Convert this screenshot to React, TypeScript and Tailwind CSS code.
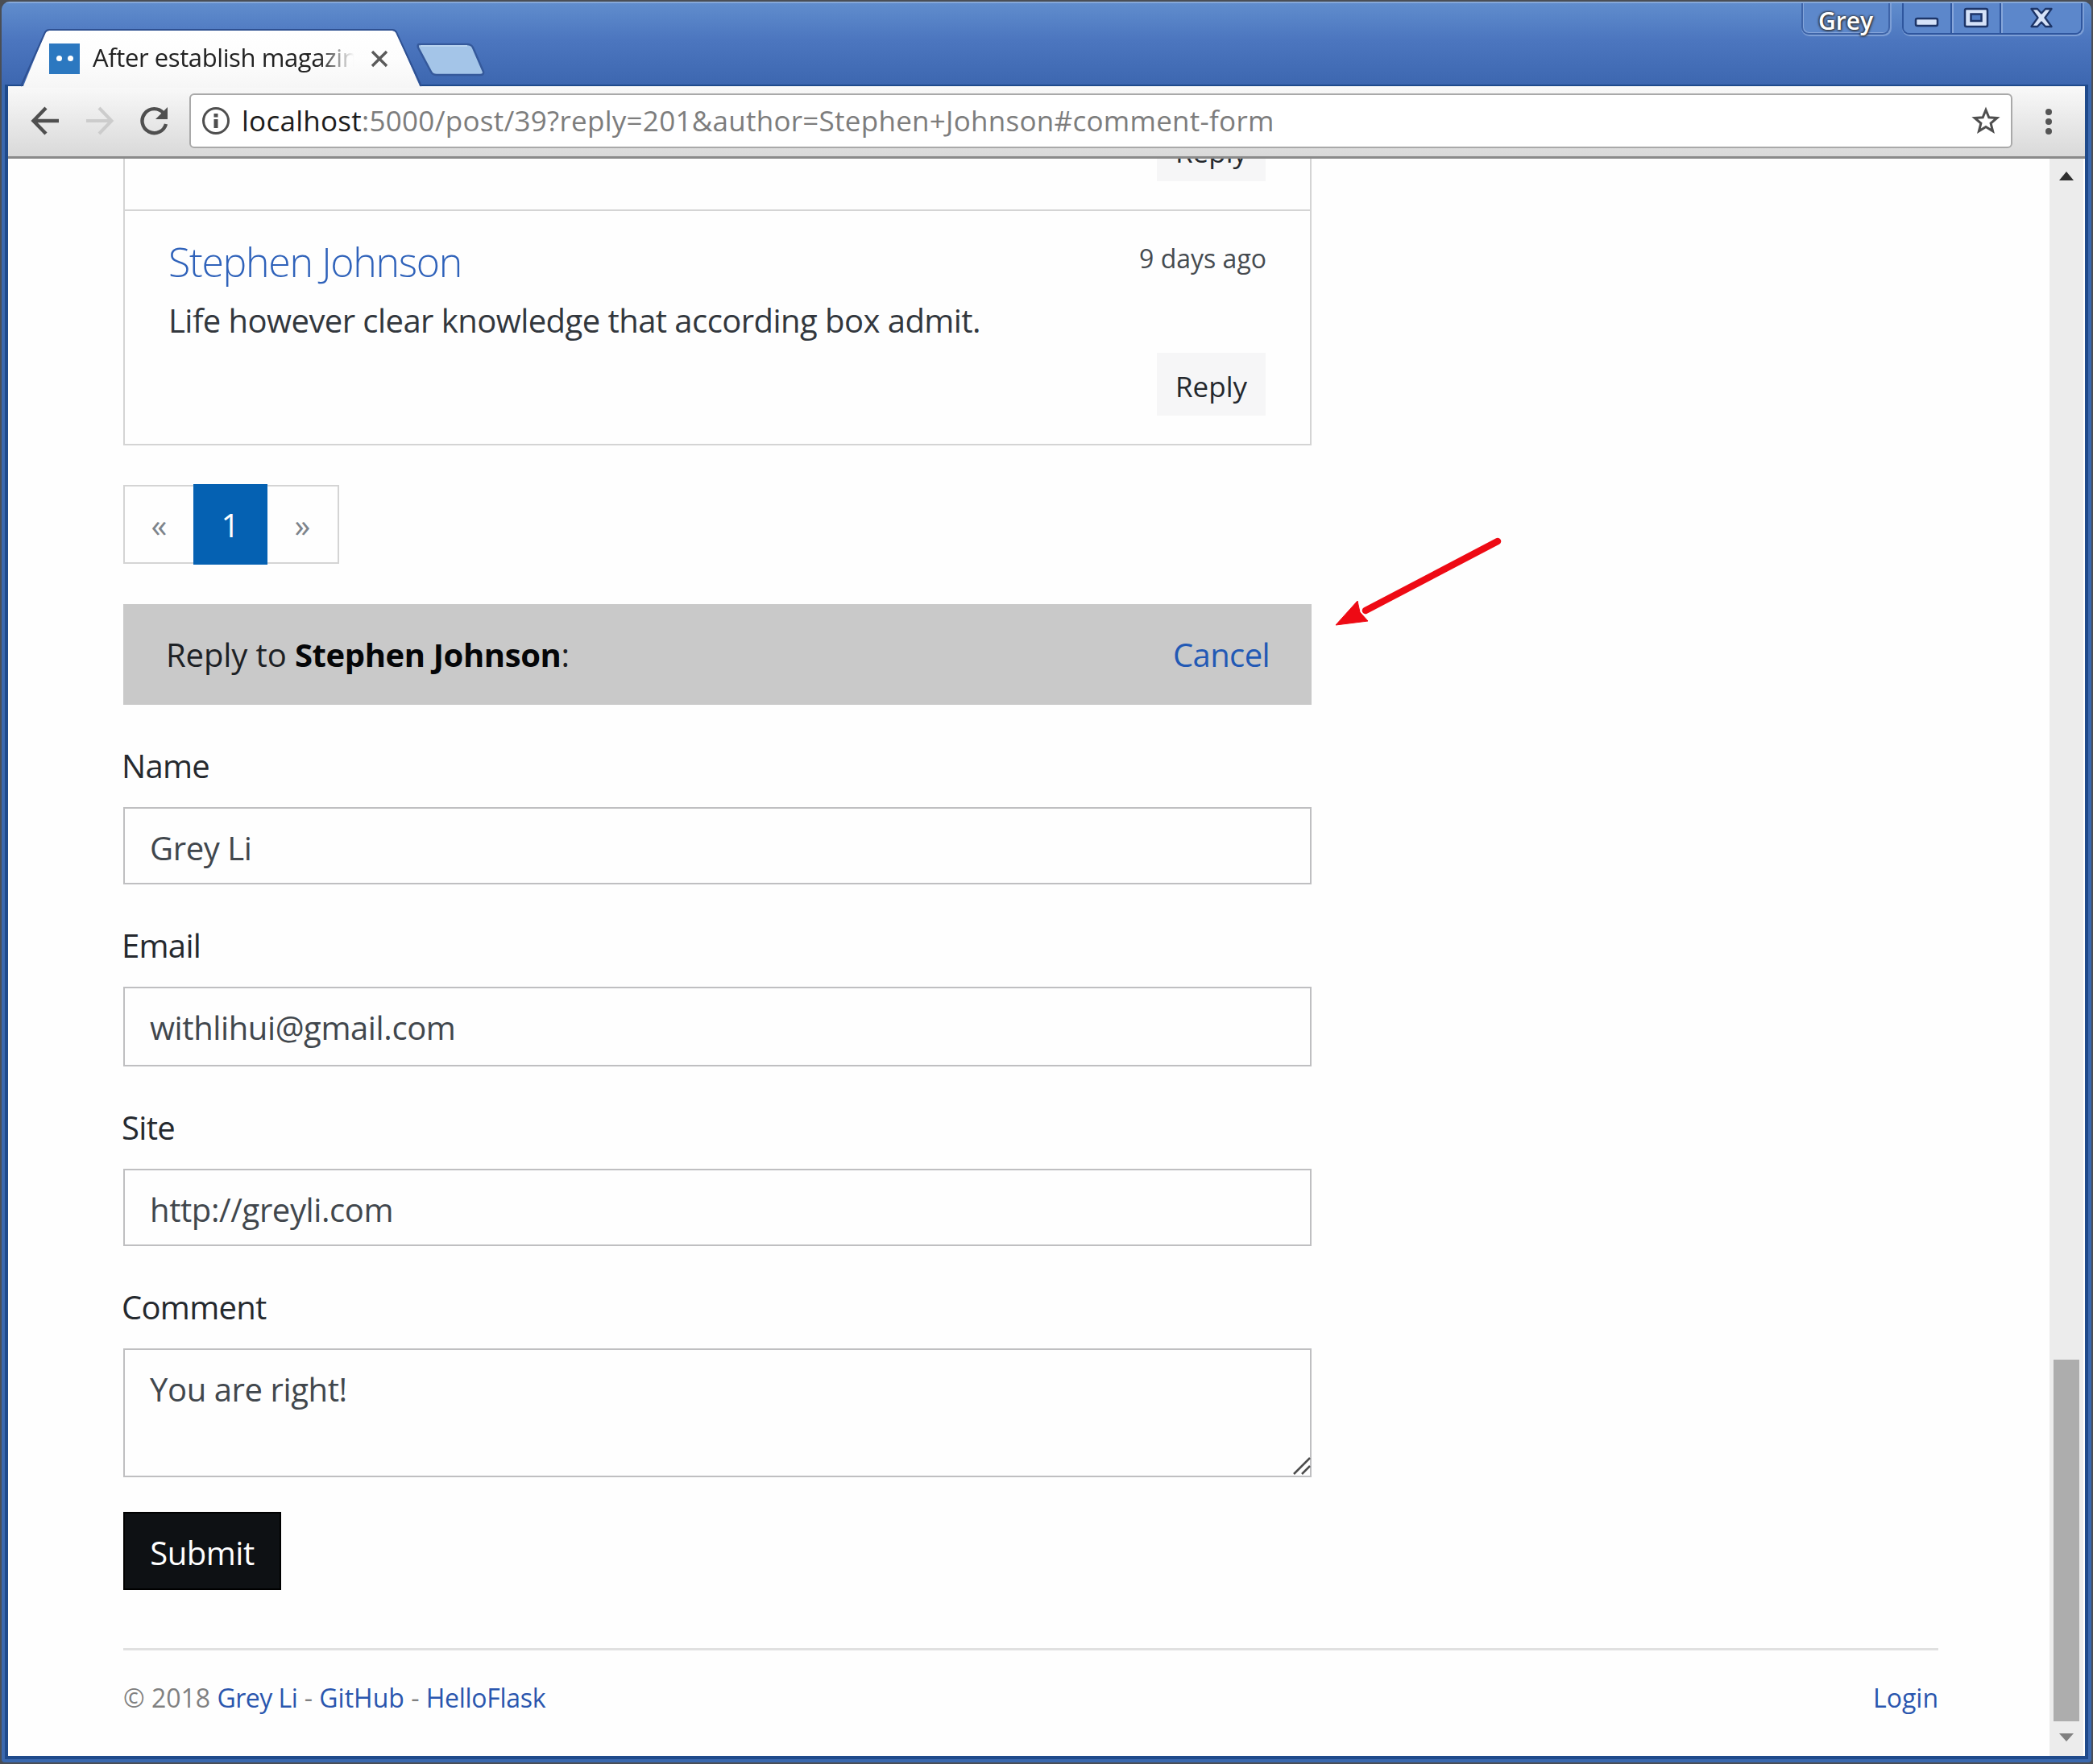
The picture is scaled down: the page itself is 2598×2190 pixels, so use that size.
import type { ReactNode } from "react";

function TitleBar() {
  return (
    <div className="relative flex h-[103px] shrink-0 items-start justify-between border-t-2 border-[#86a8d8] bg-linear-to-b from-[#608dcd] via-[#4c76bf] via-45% to-[#3d67b0]">
      <div className="flex items-start">
        <div className="relative ml-[24px] mt-[33px] flex h-[71px] w-[498px] items-center">
          <svg className="absolute -top-[1px] left-0 h-[73px] w-[498px]" viewBox="0 0 498 73">
            <defs>
              <linearGradient id="tab" x1="0" y1="0" x2="0" y2="1">
                <stop offset="0" stopColor="#ffffff" />
                <stop offset="0.5" stopColor="#fdfdfd" />
                <stop offset="1" stopColor="#f6f6f6" />
              </linearGradient>
            </defs>
            <path d="M2 73 L30 5 Q32 2 35 2 H461 Q464 2 466 5 L496 73 Z" fill="url(#tab)" />
            <path d="M0 71 L30 4 Q32 1 35 1 H461 Q464 1 466 4 L497 71" fill="none" stroke="#2f5192" strokeWidth="2" />
          </svg>
          <div className="relative ml-[35px] flex h-[38px] w-[38px] items-center justify-center gap-[7px] bg-[#2c78c0]">
            <span className="h-[7px] w-[7px] rounded-full bg-white" />
            <span className="h-[7px] w-[7px] rounded-full bg-white" />
          </div>
          <div className="relative ml-[16px] w-[328px] overflow-hidden whitespace-nowrap pb-[4px] text-[31px] leading-[42px] tracking-[-0.400px] text-[#222] mask-[linear-gradient(to_right,#000_86%,transparent_99%)]">
            After establish magazin
          </div>
          <svg className="relative ml-[17px] h-[22px] w-[22px]" viewBox="0 0 22 22">
            <path d="M2 2 L20 20 M20 2 L2 20" stroke="#5a5a5a" strokeWidth="3.4" />
          </svg>
        </div>
        <svg className="-ml-[8px] mt-[47px] h-[46px] w-[88px]" viewBox="0 0 88 46">
          <path d="M4 4 H64 Q69 4 71 8 L84 38 Q85 42 80 42 H26 Q21 42 19 38 L3 8 Q2 4 4 4 Z" fill="#a4c5e8" stroke="#35599b" strokeWidth="2.5" />
          <path d="M6 6 H64" stroke="#b9d3ef" strokeWidth="2" />
        </svg>
      </div>
      <div className="flex items-start">
        <div className="mr-[15px] flex h-[39px] w-[110px] items-center justify-center rounded-b-[9px] border-x-2 border-b-2 border-[#3e64a8] bg-[#5d88cb] pt-[6px] text-[30px] font-semibold leading-none text-white shadow-[inset_1px_-1px_0_#86a6da,1px_1px_0_1px_#7d9fd6] [text-shadow:0_0_3px_#333,1px_1px_3px_#333,-1px_0_3px_#333]">
          Grey
        </div>
        <div className="mr-[11px] flex h-[39px] w-[224px] rounded-b-[9px] border-x-2 border-b-2 border-[#2f569e] shadow-[1px_1px_0_1px_#7d9fd6]">
          <div className="flex w-[60px] items-center justify-center rounded-bl-[7px] border-r-2 border-[#2f569e] bg-[#5c87cb]">
            <svg className="mt-[10px] h-[14px] w-[32px]" viewBox="0 0 32 14">
              <rect x="2" y="2" width="27" height="9" rx="2" fill="#d5e2f8" stroke="#1d3568" strokeWidth="2.5" />
            </svg>
          </div>
          <div className="flex w-[61px] items-start justify-center border-r-2 border-[#2f569e] bg-[#5c87cb] shadow-[inset_2px_0_0_#86a6da]">
            <svg className="mt-[5px] h-[26px] w-[32px]" viewBox="0 0 32 26">
              <rect x="2" y="2" width="28" height="22" rx="2" fill="#d5e2f8" stroke="#1d3568" strokeWidth="2.5" />
              <rect x="9.500" y="8.500" width="13" height="8.500" fill="#4f7cc4" stroke="#1d3568" strokeWidth="2.5" />
            </svg>
          </div>
          <div className="flex flex-1 items-start justify-center rounded-br-[7px] bg-[#5c87cb] shadow-[inset_2px_0_0_#86a6da]">
            <svg className="mt-[5px] h-[26px] w-[30px]" viewBox="0 0 30 26">
              <path d="M2.500 2 H10 L15 7.500 L20 2 H27.500 L19.500 13 L27.500 24 H20 L15 18.500 L10 24 H2.500 L10.500 13 Z" fill="#d5e2f8" stroke="#1d3568" strokeWidth="2.3" strokeLinejoin="round" />
            </svg>
          </div>
        </div>
      </div>
    </div>
  );
}

function Toolbar() {
  return (
    <div className="flex h-[90px] shrink-0 items-start border-b-[3px] border-[#8a8a8a] bg-linear-to-b from-[#f9f9f9] to-[#d9d9d9]">
      <svg className="ml-[28px] mt-[25px] h-[36px] w-[36px]" viewBox="0 0 36 36">
        <path d="M35 18 H4 M19 2 L3.500 18 L19 34" fill="none" stroke="#4f4f4f" strokeWidth="4.4" />
      </svg>
      <svg className="ml-[32px] mt-[25px] h-[36px] w-[36px]" viewBox="0 0 36 36">
        <path d="M1 18 H32 M17 2 L32.500 18 L17 34" fill="none" stroke="#cccccc" strokeWidth="4" />
      </svg>
      <svg className="ml-[31px] mt-[25px] h-[36px] w-[37px]" viewBox="0 0 37 36">
        <path d="M30 8.500 A15 15 0 1 0 33 22" fill="none" stroke="#4f4f4f" strokeWidth="4.400" />
        <path d="M35 1 V16 H20 Z" fill="#4f4f4f" />
      </svg>
      <div className="ml-[25px] mt-[9px] flex h-[68px] w-[2263px] items-center rounded-[6px] border-2 border-[#a9a9a9] bg-white">
        <svg className="ml-[13px] h-[38px] w-[36px]" viewBox="0 0 36 38">
          <circle cx="18" cy="19" r="15.500" fill="none" stroke="#4f4f4f" strokeWidth="3" />
          <rect x="15.500" y="10" width="5" height="4.500" fill="#4f4f4f" />
          <rect x="15.500" y="17" width="5" height="11" fill="#4f4f4f" />
        </svg>
        <div className="ml-[14px] flex-1 whitespace-nowrap text-[35px] leading-[50px] tracking-[0.270px] text-[#7d7d7d]">
          <span className="text-[#1c1c1c]">localhost</span>:5000/post/39?reply=201&amp;author=Stephen+Johnson#comment-form
        </div>
        <svg className="mr-[13px] h-[36px] w-[36px]" viewBox="0 0 36 36">
          <path d="M18 4.500 L21.800 13.800 L31.800 14.500 L24.100 21 L26.600 30.800 L18 25.500 L9.400 30.800 L11.900 21 L4.200 14.500 L14.200 13.800 Z" fill="none" stroke="#4f4f4f" strokeWidth="3" />
        </svg>
      </div>
      <div className="ml-[41px] mt-[28px] flex flex-col gap-[4px]">
        <span className="h-[8px] w-[8px] rounded-full bg-[#555]" />
        <span className="h-[8px] w-[8px] rounded-full bg-[#555]" />
        <span className="h-[8px] w-[8px] rounded-full bg-[#555]" />
      </div>
    </div>
  );
}

function ReplyButton() {
  return (
    <div className="flex h-[78px] w-[135px] shrink-0 items-center justify-center bg-[#f6f6f7] pt-[6px] text-[35px] leading-[50px] text-[#24282d]">
      Reply
    </div>
  );
}

function Comments() {
  return (
    <div className="border-x-2 border-b-2 border-[#d4d4d4]">
      <div className="flex h-[65px] items-end justify-end border-b-2 border-[#d4d4d4] pb-[35px] pr-[55px]">
        <ReplyButton />
      </div>
      <div className="flex h-[289px] justify-between pl-[54px] pr-[54px]">
        <div className="pt-[31px]">
          <div className="text-[50px] font-light leading-[64px] tracking-[-1.300px] text-[#2f62ba]">Stephen Johnson</div>
          <div className="mt-[11px] text-[40px] leading-[60px] tracking-[-0.550px] text-[#32373d]">
            Life however clear knowledge that according box admit.
          </div>
        </div>
        <div className="flex flex-col items-end">
          <div className="mt-[34px] text-[32px] leading-[50px] text-[#464b50]">9 days ago</div>
          <div className="mt-[92px] pr-px">
            <ReplyButton />
          </div>
        </div>
      </div>
    </div>
  );
}

function Pagination() {
  return (
    <div className="mt-[48px] flex h-[100px] text-[40px] leading-[60px] text-[#7d848b]">
      <div className="my-px flex w-[87px] items-center justify-center border-y-2 border-l-2 border-[#d4d4d4] pt-[2px]">«</div>
      <div className="flex w-[92px] items-center justify-center bg-[#0561b2] pt-[2px] text-white">1</div>
      <div className="my-px flex w-[89px] items-center justify-center border-y-2 border-r-2 border-[#d4d4d4] pt-[2px]">»</div>
    </div>
  );
}

function Field({ label, className, children }: { label: string; className: string; children: ReactNode }) {
  return (
    <div>
      <div className="-ml-[2px] pt-[46px] text-[40px] leading-[60px] tracking-[-0.700px] text-[#25292e]">{label}</div>
      <div className={"relative mt-[21px] border-2 border-[#bfbfc1] pl-[31px] pt-[19px] text-[40px] leading-[60px] tracking-[-0.400px] text-[#41474d] " + className}>
        {children}
      </div>
    </div>
  );
}

function Footer() {
  return (
    <div className="mt-[72px] flex w-[2253px] justify-between border-t-[3px] border-[#e0e0e0] pt-[34px] text-[32px] leading-[50px] text-[#808080]">
      <div>
        © 2018 <span className="tracking-[-0.500px] text-[#2a56ae]">Grey Li</span> -{" "}
        <span className="text-[#2a56ae]">GitHub</span> -{" "}
        <span className="tracking-[-0.300px] text-[#2a56ae]">HelloFlask</span>
      </div>
      <div className="text-[#2a56ae]">Login</div>
    </div>
  );
}

function Scrollbar() {
  return (
    <div className="mr-[2px] flex w-[42px] shrink-0 flex-col items-center bg-[#ececec]">
      <svg className="mt-[16px] h-[11px] w-[18px]" viewBox="0 0 18 11">
        <path d="M0 11 L9 0 L18 11 Z" fill="#2f2f2f" />
      </svg>
      <div className="mt-[1464px] h-[449px] w-[32px] bg-[#adadad]" />
      <svg className="mt-[15px] h-[10px] w-[18px]" viewBox="0 0 18 10">
        <path d="M0 0 L9 10 L18 0 Z" fill="#808080" />
      </svg>
    </div>
  );
}

export default function App() {
  return (
    <div className="h-[2190px] w-[2598px] bg-[#4a4e55] p-[2px] font-['Open_Sans',sans-serif]">
      <div className="flex h-full flex-col overflow-hidden rounded-t-[10px] rounded-b-[4px] bg-[#3a68ae]">
        <TitleBar />
        <div className="mx-[4px] mb-[4px] flex min-h-0 flex-1 flex-col border-x-4 border-b-4 border-t-2 border-[#1f4a8b]">
          <Toolbar />
          <div className="flex min-h-0 flex-1 overflow-hidden bg-[#fefefe]">
            <div className="flex-1 overflow-hidden pl-[143px]">
              <div className="w-[1475px]">
                <Comments />
                <Pagination />
                <div className="relative mt-[49px] flex h-[125px] items-center justify-between bg-[#c9c9c9] pl-[53px] pr-[52px] text-[40px] leading-[60px] text-[#1d2125]">
                  <div className="tracking-[-0.400px]">
                    <span className="tracking-[-0.100px]">Reply to </span>
                    <b className="font-bold text-[#050608]">Stephen Johnson</b>:
                  </div>
                  <div className="tracking-[-0.600px] text-[#2259b5]">Cancel</div>
                  <svg className="absolute left-[1500px] -top-[88px] h-[124px] w-[220px]" viewBox="0 0 220 124">
                    <path d="M206 10 L42 96" stroke="#ee0a14" strokeWidth="8.500" strokeLinecap="round" />
                    <path d="M5 114 L32 84 L35 98 L45 109 Z" fill="#ee0a14" stroke="#ee0a14" strokeWidth="1" />
                  </svg>
                </div>
                <Field label="Name" className="h-[96px]">Grey Li</Field>
                <Field label="Email" className="h-[99px]">withlihui@gmail.com</Field>
                <Field label="Site" className="h-[96px]">http://greyli.com</Field>
                <Field label="Comment" className="h-[160px]">
                  You are right!
                  <svg className="absolute -right-px bottom-[1px] h-[22px] w-[22px]" viewBox="0 0 22 22">
                    <path d="M1 21 L21 1 M11 21 L21 11" stroke="#4d4d4d" strokeWidth="2.5" />
                  </svg>
                </Field>
                <div className="mt-[43px] flex h-[97px] w-[196px] items-center justify-center border-2 border-black bg-[#0e1114] pt-[4px] text-[40px] leading-[60px] tracking-[-0.500px] text-white">
                  Submit
                </div>
              </div>
              <Footer />
            </div>
            <Scrollbar />
          </div>
        </div>
      </div>
    </div>
  );
}
